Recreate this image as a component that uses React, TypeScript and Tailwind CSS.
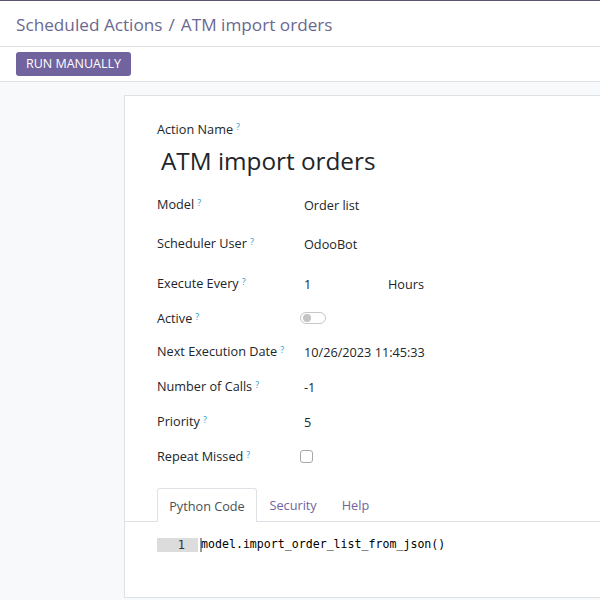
import React from "react";

const font = { fontFamily: '"Open Sans", "Noto Sans", sans-serif' };
const mono = { fontFamily: '"DejaVu Sans Mono", monospace' };

const Hint = () => (
  <sup className="ml-[3px] text-[9px] text-[#1f9bd1] relative -top-[3px]">?</sup>
);

interface RowProps {
  label: string;
  mt: string;
  children?: React.ReactNode;
}

const Row: React.FC<RowProps> = ({ label, mt, children }) => (
  <div className={`flex items-center h-[20px] ${mt}`}>
    <div className="w-[147px] shrink-0 text-[12.7px] text-[#212529] whitespace-nowrap pt-[1px]">
      {label}
      <Hint />
    </div>
    <div className="flex items-center text-[12.7px] text-[#212529] pt-[3px]">{children}</div>
  </div>
);

export default function App() {
  return (
    <div className="w-[600px] h-[600px] overflow-hidden bg-white flex flex-col" style={font}>
      {/* top nav edge */}
      <div className="h-px bg-[#5f5573]" />

      {/* Breadcrumb */}
      <div className="h-[46px] flex items-center px-4 pt-[3px] border-b border-[#dee2e6]">
        <span className="text-[17.2px] text-[#6b6891]">Scheduled Actions</span>
        <span className="text-[17.2px] text-[#6b6891] mx-[6px]">/</span>
        <span className="text-[17.2px] text-[#6b6891]">ATM import orders</span>
      </div>

      {/* Button bar */}
      <div className="h-[35px] flex items-center px-4 border-b border-[#dee2e6]">
        <button className="h-[24px] w-[115px] pt-[1px] rounded-[3px] bg-[#71639e] text-white text-[12.5px] leading-none">
          RUN MANUALLY
        </button>
      </div>

      {/* Sheet area */}
      <div className="flex-1 bg-[#f8f9fa] pl-[124px] pt-[13px] pb-[2px]">
        <div className="h-full bg-white border border-[#dee2e6] border-r-0 pt-[24px]">
          <div className="px-[32px]">
            <div className="h-[20px] flex items-center text-[12.7px] text-[#212529]">
              Action Name
              <Hint />
            </div>
            <div className="mt-[5px] h-[32px] flex items-center pl-[4px] text-[24.3px] text-[#212529]">
              ATM import orders
            </div>

            <Row label="Model" mt="mt-[17px]">Order list</Row>
            <Row label="Scheduler User" mt="mt-[19px]">OdooBot</Row>
            <Row label="Execute Every" mt="mt-[20px]">
              <span className="w-[84px]">1</span>
              <span>Hours</span>
            </Row>
            <Row label="Active" mt="mt-[15px]">
              <span className="relative inline-block w-[26px] h-[12px] rounded-full border border-[#c7c7c7] -ml-[4px] -mt-[3px]">
                <span className="absolute left-[2px] top-[1px] w-[8px] h-[8px] rounded-full bg-[#c4c4c4]" />
              </span>
            </Row>
            <Row label="Next Execution Date" mt="mt-[13px]">10/26/2023 11:45:33</Row>
            <Row label="Number of Calls" mt="mt-[15px]">-1</Row>
            <Row label="Priority" mt="mt-[15px]">5</Row>
            <Row label="Repeat Missed" mt="mt-[15px]">
              <span className="inline-block w-[13px] h-[13px] rounded-[3px] border border-[#a8a8a8] -ml-[4px] -mt-[3px]" />
            </Row>
          </div>

          {/* Tabs */}
          <div className="mt-[22px] flex items-end pl-[32px] border-b border-[#dee2e6] h-[34px]">
            <div className="h-[34px] w-[100px] pt-[3px] flex items-center justify-center border border-b-0 border-[#dee2e6] rounded-t-[3px] bg-white -mb-px text-[12.7px] text-[#495057]">
              Python Code
            </div>
            <div className="h-[33px] pt-[3px] flex items-center px-[12.5px] text-[12.7px] text-[#71639e]">Security</div>
            <div className="h-[33px] pt-[3px] flex items-center px-[12.5px] text-[12.7px] text-[#71639e]">Help</div>
          </div>

          {/* Code editor */}
          <div className="mt-[16px] pl-[32px] flex items-center h-[14px]">
            <div className="w-[41px] h-[14px] bg-[#dcdcdc] text-right pr-[13px] text-[12px] leading-[14px] text-[#333]" style={mono}>
              1
            </div>
            <div className="w-[2px] h-[14px] bg-[#999] ml-[2px]" />
            <div className="text-[11.6px] text-[#000] -ml-px" style={mono}>
              model.import_order_list_from_json()
            </div>
          </div>
        </div>
      </div>
    </div>
  );
}
